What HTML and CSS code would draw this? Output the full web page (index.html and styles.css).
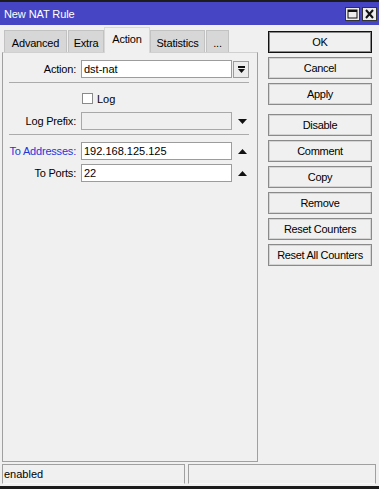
FILE: index.html
```html
<!DOCTYPE html>
<html>
<head>
    <title>New NAT Rule</title>
    <link rel="stylesheet" href="styles.css">
</head>
<body>
    <div class="window">
        <div class="titlebar">
            <span class="title">New NAT Rule</span>
            <div class="title-buttons">
                <span class="tb-btn">
                    <svg width="11" height="10" viewBox="0 0 11 10"><rect x="1" y="1" width="9" height="8" fill="none" stroke="#111" stroke-width="1"/><rect x="1" y="1" width="9" height="2" fill="#111"/></svg>
                </span>
                <span class="tb-btn">
                    <svg width="11" height="10" viewBox="0 0 11 10"><path d="M2 1 L9 9 M9 1 L2 9" stroke="#111" stroke-width="2"/></svg>
                </span>
            </div>
        </div>

        <div class="main">
            <div class="left">
                <div class="tabs">
                    <div class="tab tab-advanced">Advanced</div>
                    <div class="tab tab-extra">Extra</div>
                    <div class="tab tab-action active">Action</div>
                    <div class="tab tab-stats">Statistics</div>
                    <div class="tab tab-more">...</div>
                </div>

                <div class="panel">
                    <div class="field-row">
                        <label class="field-label">Action:</label>
                        <div class="input">dst-nat</div>
                        <div class="drop-btn">
                            <svg width="9" height="9" viewBox="0 0 9 9"><rect x="1" y="1" width="7" height="2" fill="#111"/><polygon points="1,4 8,4 4.5,8" fill="#111"/></svg>
                        </div>
                    </div>

                    <div class="separator"></div>

                    <div class="field-row check-row">
                        <span></span>
                        <div class="check"><span class="box"></span>Log</div>
                    </div>

                    <div class="field-row">
                        <label class="field-label">Log Prefix:</label>
                        <div class="input disabled"></div>
                        <div class="arrow">
                            <svg width="9" height="5" viewBox="0 0 9 5"><polygon points="0,0 9,0 4.5,5" fill="#111"/></svg>
                        </div>
                    </div>

                    <div class="separator sep-low"></div>

                    <div class="field-row">
                        <label class="field-label blue">To Addresses:</label>
                        <div class="input">192.168.125.125</div>
                        <div class="arrow">
                            <svg width="9" height="5" viewBox="0 0 9 5"><polygon points="0,5 9,5 4.5,0" fill="#111"/></svg>
                        </div>
                    </div>

                    <div class="field-row">
                        <label class="field-label">To Ports:</label>
                        <div class="input">22</div>
                        <div class="arrow">
                            <svg width="9" height="5" viewBox="0 0 9 5"><polygon points="0,5 9,5 4.5,0" fill="#111"/></svg>
                        </div>
                    </div>
                </div>
            </div>

            <div class="buttons">
                <button class="btn default">OK</button>
                <button class="btn">Cancel</button>
                <button class="btn">Apply</button>
                <button class="btn group-start">Disable</button>
                <button class="btn">Comment</button>
                <button class="btn">Copy</button>
                <button class="btn">Remove</button>
                <button class="btn">Reset Counters</button>
                <button class="btn">Reset All Counters</button>
            </div>
        </div>

        <div class="statusbar">
            <div class="cell cell-first">enabled</div>
            <div class="cell"></div>
        </div>
    </div>
</body>
</html>
```

FILE: styles.css
```css
body {
    margin: 0;
    font-family: 'Liberation Sans', Arial, sans-serif;
    font-size: 11px;
    color: #000;
    background: #f0f0f0;
}

.window {
    width: 379px;
    height: 489px;
    box-sizing: border-box;
    display: flex;
    flex-direction: column;
    background: #f0f0f0;
    border-top: 2px solid #1c1c1c;
    border-bottom: 3px solid #1c1c1c;
}

.titlebar {
    height: 23px;
    flex-shrink: 0;
    background: #4646c4;
    display: flex;
    align-items: center;
    justify-content: space-between;
    padding: 0 2px 0 4px;
}

.title {
    color: #fff;
    font-size: 11px;
    letter-spacing: -0.1px;
}

.title-buttons {
    display: flex;
    gap: 2px;
}

.tb-btn {
    width: 15px;
    height: 14px;
    box-sizing: border-box;
    border: 1px solid #333;
    background: #ececec;
    display: flex;
    align-items: center;
    justify-content: center;
}

.main {
    flex: 1;
    display: flex;
}

.left {
    width: 256px;
    margin-left: 2px;
    display: flex;
    flex-direction: column;
}

.tabs {
    height: 27px;
    flex-shrink: 0;
    display: flex;
    align-items: flex-end;
    padding-left: 2px;
}

.tab {
    height: 22px;
    box-sizing: border-box;
    background: #d7d7d7;
    border: 1px solid #c2c2c2;
    border-bottom: none;
    display: flex;
    align-items: center;
    justify-content: center;
    letter-spacing: -0.2px;
    padding-top: 2px;
}

.tab-advanced { width: 63px; margin-right: 1px; }
.tab-extra { width: 36px; }
.tab-action { width: 46px; }
.tab-stats { width: 55px; margin-right: 1px; }
.tab-more { width: 23px; }

.tab.active {
    height: 26px;
    margin-bottom: -1px;
    background: #f0f0f0;
    border-color: #d8d8d8;
    position: relative;
    padding-top: 0;
    padding-bottom: 3px;
}

.panel {
    flex: 1;
    box-sizing: border-box;
    border: 1px solid #a0a0a0;
    border-top-color: #d0d0d0;
    padding: 7px 8px 0 5px;
}

.field-row {
    display: grid;
    grid-template-columns: 73px 151px 17px;
    height: 18px;
    align-items: center;
    margin-bottom: 4px;
}

.field-label {
    text-align: right;
    padding-right: 5px;
    letter-spacing: -0.2px;
}

.field-label.blue {
    color: #1f36d8;
}

.input {
    height: 18px;
    box-sizing: border-box;
    border: 1px solid #9c9c9c;
    background: #fff;
    padding-left: 2px;
    line-height: 16px;
}

.input.disabled {
    background: #efefef;
    border-color: #a8a8a8;
}

.drop-btn {
    height: 17px;
    box-sizing: border-box;
    border: 1px solid #9c9c9c;
    background: #ececec;
    display: flex;
    align-items: center;
    justify-content: center;
    margin-left: 1px;
}

.arrow {
    display: flex;
    justify-content: flex-end;
    padding-right: 2px;
}

.separator {
    height: 1px;
    background: #ababab;
    margin: 2px 0 6px 1px;
}

.sep-low {
    margin-top: 2px;
    margin-bottom: 7px;
}

.check-row {
    height: 19px;
}

.check {
    display: flex;
    align-items: center;
    padding-left: 1px;
}

.check .box {
    width: 11px;
    height: 11px;
    box-sizing: border-box;
    border: 1px solid #8a8a8a;
    background: #fff;
    margin-right: 4px;
}

.buttons {
    width: 104px;
    margin-left: 10px;
    padding-top: 6px;
    display: flex;
    flex-direction: column;
}

.btn {
    height: 22px;
    margin-bottom: 4px;
    font-family: 'Liberation Sans', Arial, sans-serif;
    font-size: 11px;
    letter-spacing: -0.3px;
    color: #000;
    background: #f0f0f0;
    border: 1px solid #8a8a8a;
    box-shadow: inset 0 0 0 1px #d4d4d4;
    padding: 0;
}

.btn.default {
    border-color: #111;
    box-shadow: inset 0 0 0 1px #8a8a8a;
}

.btn.group-start {
    margin-top: 5px;
}

.statusbar {
    display: flex;
    gap: 3px;
    padding: 0 3px 0 2px;
    margin: 2px 0 2px;
}

.cell {
    flex: 1;
    height: 20px;
    box-sizing: border-box;
    border: 1px solid #a0a0a0;
    border-bottom-color: #f8f8f8;
    padding-left: 1px;
    line-height: 18px;
}

.cell-first {
    flex: none;
    width: 183px;
}
```
